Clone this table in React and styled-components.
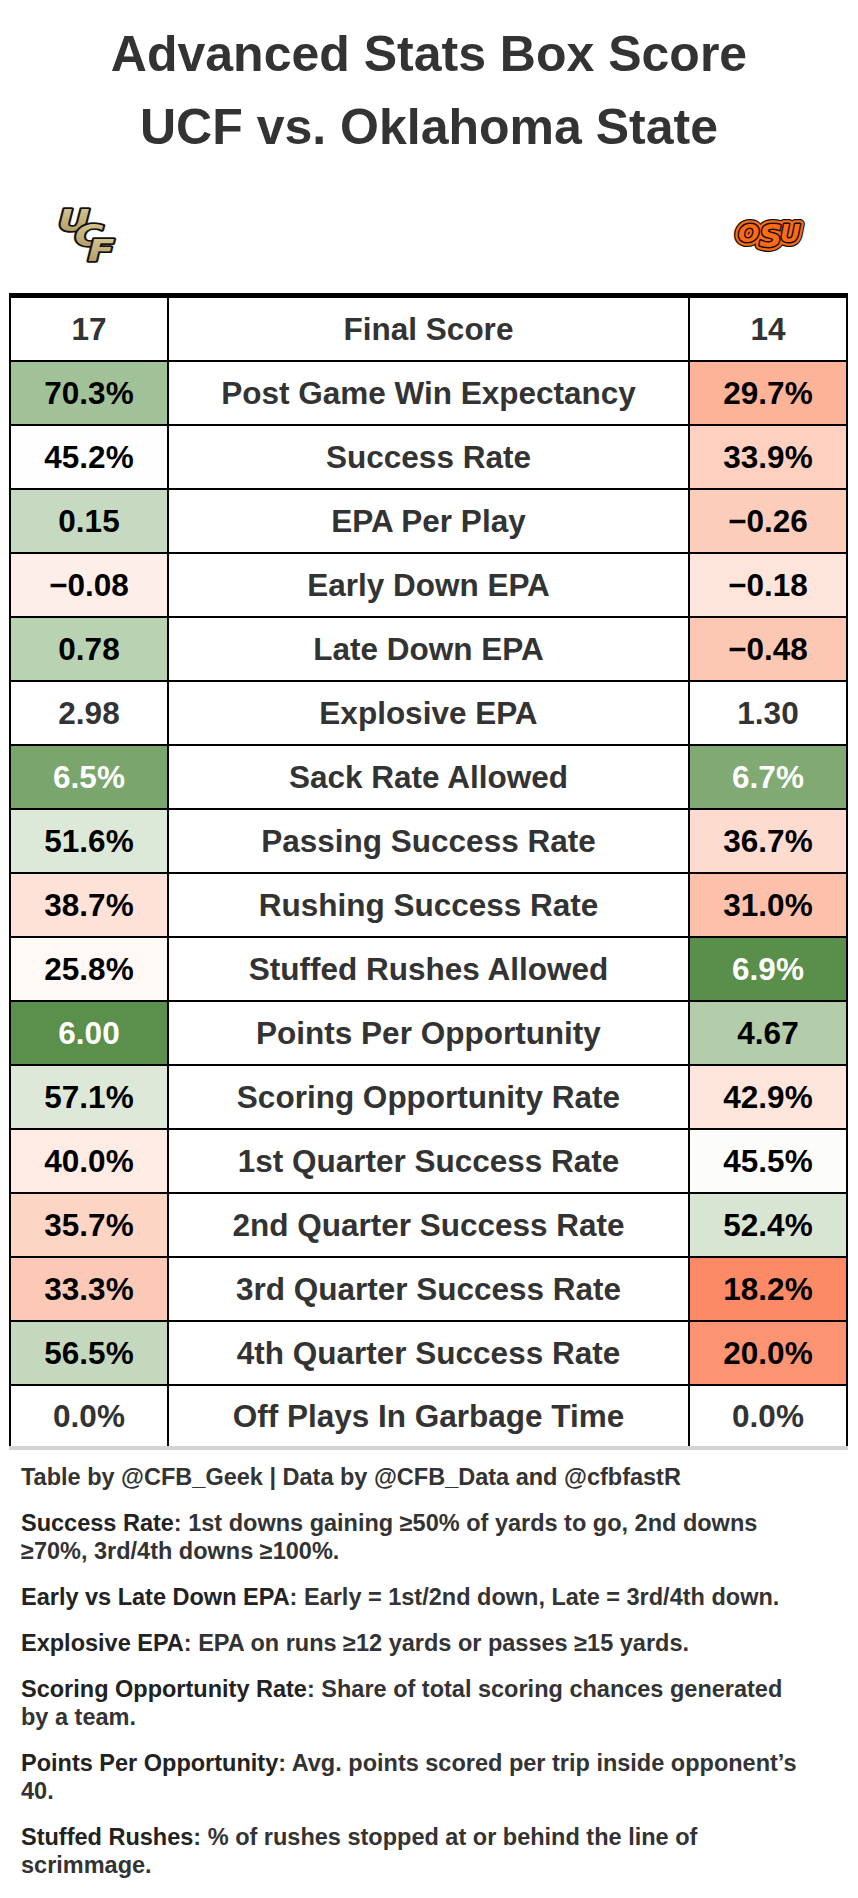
import styled, { createGlobalStyle } from "styled-components";

const GlobalStyle = createGlobalStyle`
  body {
    margin: 0;
    background: #fff;
  }
  #root {
    width: 858px;
  }
`;

const rows = [
  ["17", null, "Final Score", "14", null],
  ["70.3%", "#a1c299", "Post Game Win Expectancy", "29.7%", "#fcb398"],
  ["45.2%", "#fefefe", "Success Rate", "33.9%", "#fdd0c0"],
  ["0.15", "#c6d9c1", "EPA Per Play", "−0.26", "#fdcdbb"],
  ["−0.08", "#feeee9", "Early Down EPA", "−0.18", "#fee5db"],
  ["0.78", "#b9d2b2", "Late Down EPA", "−0.48", "#fcc8b4"],
  ["2.98", null, "Explosive EPA", "1.30", null],
  ["6.5%", "#7aa66d", "Sack Rate Allowed", "6.7%", "#80a974"],
  ["51.6%", "#dce8d8", "Passing Success Rate", "36.7%", "#fedbcf"],
  ["38.7%", "#fee2d8", "Rushing Success Rate", "31.0%", "#fdc1ab"],
  ["25.8%", "#fff8f5", "Stuffed Rushes Allowed", "6.9%", "#5a8f4b"],
  ["6.00", "#5a8f4c", "Points Per Opportunity", "4.67", "#b3cca9"],
  ["57.1%", "#dde8d9", "Scoring Opportunity Rate", "42.9%", "#fee5dc"],
  ["40.0%", "#feebe3", "1st Quarter Success Rate", "45.5%", "#fcfdfb"],
  ["35.7%", "#fdd5c5", "2nd Quarter Success Rate", "52.4%", "#d9e5d3"],
  ["33.3%", "#fcc9b6", "3rd Quarter Success Rate", "18.2%", "#fc8a66"],
  ["56.5%", "#c4d8be", "4th Quarter Success Rate", "20.0%", "#fc9474"],
  ["0.0%", null, "Off Plays In Garbage Time", "0.0%", null],
];

const dark = ["#7aa66d", "#80a974", "#5a8f4b", "#5a8f4c"];

const notes = [
  ["Success Rate", ": 1st downs gaining ≥50% of yards to go, 2nd downs", "≥70%, 3rd/4th downs ≥100%."],
  ["Early vs Late Down EPA", ": Early = 1st/2nd down, Late = 3rd/4th down."],
  ["Explosive EPA", ": EPA on runs ≥12 yards or passes ≥15 yards."],
  ["Scoring Opportunity Rate", ": Share of total scoring chances generated", "by a team."],
  ["Points Per Opportunity", ": Avg. points scored per trip inside opponent’s", "40."],
  ["Stuffed Rushes", ": % of rushes stopped at or behind the line of", "scrimmage."],
];

const UcfLogo = () => (
  <svg width="70" height="60" viewBox="0 0 70 60" overflow="visible">
    <defs>
      <linearGradient id="gold" x1="0" y1="0" x2="0" y2="1">
        <stop offset="0" stopColor="#dccb98" />
        <stop offset="1" stopColor="#a8945f" />
      </linearGradient>
    </defs>
    <g
      transform="scale(1.3 1)"
      fontFamily="'DejaVu Sans', sans-serif"
      fontWeight="bold"
      fontStyle="italic"
      fontSize="30"
      fill="url(#gold)"
      stroke="#111"
      strokeWidth="3.4"
      strokeLinejoin="round"
      paintOrder="stroke"
    >
      <text x="3" y="27">U</text>
      <text x="16" y="42">C</text>
      <text x="26" y="57">F</text>
    </g>
  </svg>
);

const osuLetters = (
  <>
    <text x="5" y="30" fontSize="25">O</text>
    <text x="26" y="35" fontSize="32">S</text>
    <text x="47" y="30" fontSize="25">U</text>
  </>
);

const OsuLogo = () => (
  <svg width="72" height="44" viewBox="0 0 72 44">
    <g
      fontFamily="'DejaVu Sans', sans-serif"
      fontWeight="bold"
      fontStyle="italic"
      strokeLinejoin="round"
    >
      <g fill="#111" stroke="#111" strokeWidth="10">{osuLetters}</g>
      <g fill="#ff6a13" stroke="#ff6a13" strokeWidth="7.5">{osuLetters}</g>
      <g fill="#111" stroke="#111" strokeWidth="3">{osuLetters}</g>
      <g fill="#ff6a13">{osuLetters}</g>
    </g>
  </svg>
);

const App = () => {
  return (
    <>
      <GlobalStyle />
      <Page>
        <Title>
          Advanced Stats Box Score
          <br />
          UCF vs. Oklahoma State
        </Title>
        <LogoRow>
          <UcfLogo />
          <OsuLogo />
        </LogoRow>
        <Table>
          {rows.map(([a, ac, label, b, bc], i) => (
            <Row key={label} $last={i === rows.length - 1}>
              <Value $bg={ac} $light={dark.includes(ac)}>{a}</Value>
              <Label>{label}</Label>
              <Value $bg={bc} $light={dark.includes(bc)} $right>{b}</Value>
            </Row>
          ))}
        </Table>
        <Notes>
          <Credit>Table by @CFB_Geek | Data by @CFB_Data and @cfbfastR</Credit>
          {notes.map(([term, text, more]) => (
            <Note key={term}>
              <strong>{term}</strong>
              {text}
              {more && (
                <>
                  <br />
                  {more}
                </>
              )}
            </Note>
          ))}
        </Notes>
      </Page>
    </>
  );
};
export default App;

const Page = styled.div`
  width: 858px;
  font-family: "Liberation Sans", Arial, sans-serif;
  color: #333;
`;

const Title = styled.h1`
  margin: 18px 0 0;
  font-size: 50px;
  line-height: 73px;
  font-weight: 700;
  text-align: center;
  color: #333;
`;

const LogoRow = styled.div`
  display: flex;
  justify-content: space-between;
  align-items: center;
  height: 60px;
  margin-top: 40px;
  padding: 0 53px 0 54px;
`;

const Table = styled.div`
  margin: 29px 0 0 9px;
  width: 839px;
  box-sizing: border-box;
  border-top: 5px solid #000;
  border-left: 2px solid #000;
  border-right: 2px solid #000;
`;

const Row = styled.div`
  display: grid;
  grid-template-columns: 158px 1fr 156px;
  height: 64px;
  box-sizing: border-box;
  border-bottom: ${(p) => (p.$last ? "4px solid #d3d3d3" : "2px solid #000")};
  margin: ${(p) => (p.$last ? "0 -2px" : "0")};
  padding: ${(p) => (p.$last ? "0 2px" : "0")};
`;

const Cell = styled.div`
  display: flex;
  align-items: center;
  justify-content: center;
  font-size: 31.5px;
  font-weight: 700;
`;

const Value = styled(Cell)`
  background: ${(p) => p.$bg || "#fff"};
  color: ${(p) => (p.$light ? "#fff" : p.$bg ? "#000" : "#333")};
  border-right: ${(p) => (p.$right ? "none" : "2px solid #000")};
`;

const Label = styled(Cell)`
  color: #333;
  border-right: 2px solid #000;
`;

const Notes = styled.div`
  padding: 13px 0 0 21px;
  font-size: 23.5px;
  line-height: 28px;
  color: #333;
  white-space: nowrap;
`;

const Credit = styled.p`
  margin: 0;
  font-weight: 700;
`;

const Note = styled.p`
  margin: 18px 0 0;
  font-weight: 700;
  strong {
    font-weight: 700;
    color: #222;
  }
`;
